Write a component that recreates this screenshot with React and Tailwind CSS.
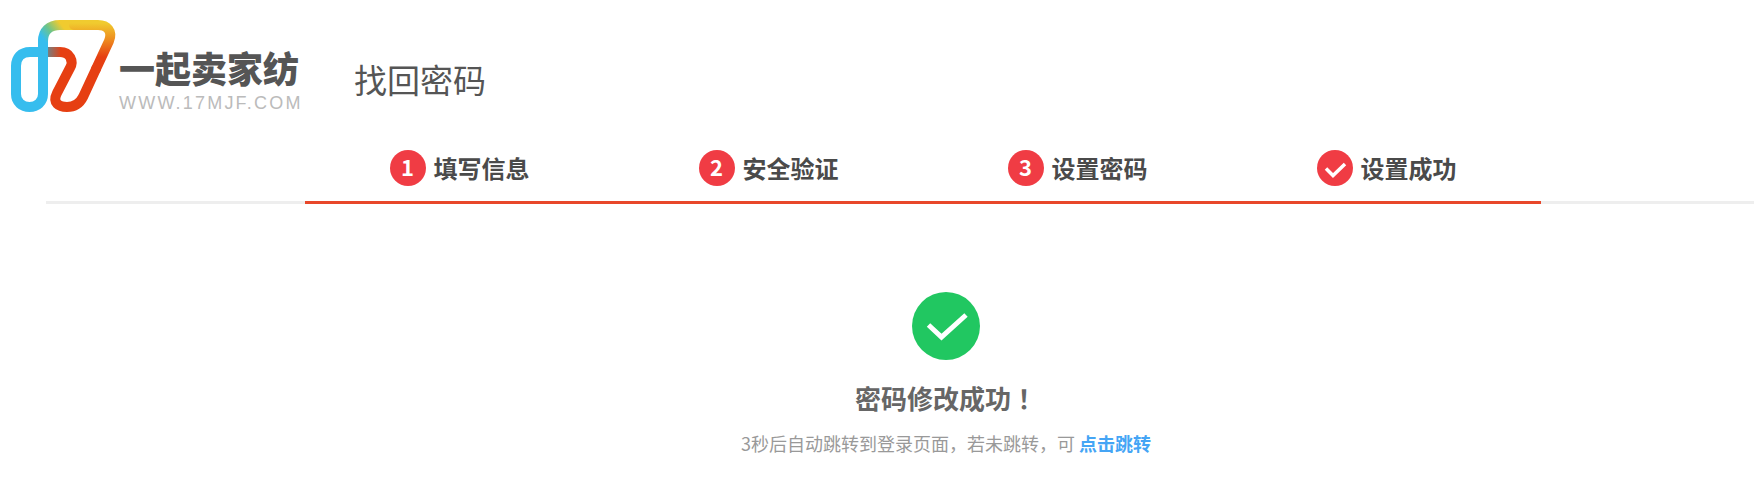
import React from 'react';

const steps = [
  { label: '填写信息', mark: '1' },
  { label: '安全验证', mark: '2' },
  { label: '设置密码', mark: '3' },
  { label: '设置成功', mark: 'check' },
];

// 站点 logo：蓝黄红三色线条
const LogoMark = () => (
  <svg width="111" height="120" viewBox="0 0 111 120" fill="none" strokeWidth="10" strokeLinecap="round" className="shrink-0 -mt-[14px]">
    <defs>
      <linearGradient id="cornerLeft" gradientUnits="userSpaceOnUse" x1="42" y1="36" x2="60" y2="22">
        <stop offset="0" stopColor="#36bdee" />
        <stop offset="0.45" stopColor="#6cc48c" />
        <stop offset="1" stopColor="#f0cb2f" />
      </linearGradient>
      <linearGradient id="cornerRight" gradientUnits="userSpaceOnUse" x1="100" y1="22" x2="100" y2="56">
        <stop offset="0" stopColor="#f0cb2f" />
        <stop offset="0.5" stopColor="#ee8a1e" />
        <stop offset="1" stopColor="#e63f12" />
      </linearGradient>
      <linearGradient id="crossBar" gradientUnits="userSpaceOnUse" x1="44" y1="51" x2="62" y2="51">
        <stop offset="0" stopColor="#5b8f9c" />
        <stop offset="1" stopColor="#e63f12" />
      </linearGradient>
    </defs>
    <g transform="translate(-10 0)">
      <path d="M60 51 C70 51 74 60 70 67 L57 92 C52 102 59 106 67 106 C75 106 80 102 83 96 L96 68" stroke="#e63f12" />
      <path d="M44 51 H60" stroke="url(#crossBar)" strokeLinecap="butt" />
      <path d="M43 51 H30 C21 51 16 57 16 65 V93 C16 101 22 106 29.500 106 C37 106 43 101 43 93 V40" stroke="#36bdee" />
      <path d="M43 40 C43 30 49 24 60 24 H74" stroke="url(#cornerLeft)" />
      <path d="M74 24 H98 C107 24 113 30 109 40 L96 68" stroke="url(#cornerRight)" />
    </g>
  </svg>
);

const StepMark = ({ mark }) => (
  <span className="w-[36px] h-[36px] rounded-full bg-[#f03c44] flex items-center justify-center text-white text-[22px] font-bold leading-none">
    {mark === 'check' ? (
      <svg width="36" height="36" viewBox="0 0 36 36" fill="none" stroke="#fff" strokeWidth="3.500">
        <path d="M9 18.500 L16 25.500 L28 14" />
      </svg>
    ) : (
      <span className="pb-[4px]">{mark}</span>
    )}
  </span>
);

export default function App() {
  return (
    <div className="w-full h-[478px] overflow-hidden bg-white font-['Noto_Sans_CJK_SC','Noto_Sans',sans-serif]">
      {/* Header */}
      <header className="flex items-start h-[132px] pl-[10px] pt-[15px]">
        <LogoMark />
        <div className="w-[184px] shrink-0 -ml-[2px] pt-[30px]">
          <div className="text-[36px] leading-[44px] font-black text-[#555] whitespace-nowrap">一起卖家纺</div>
          <div className="text-[18px] leading-[20px] mt-[4px] text-[#bbb] tracking-[2.200px] whitespace-nowrap font-['Liberation_Sans',sans-serif]">WWW.17MJF.COM</div>
        </div>
        <h1 className="ml-[51px] mt-[40px] text-[33px] leading-[48px] font-normal text-[#555] whitespace-nowrap">找回密码</h1>
      </header>

      {/* Steps */}
      <div className="ml-[46px] border-b-[3px] border-[#eeeeee] h-[72px] pl-[259px]">
        <div className="flex w-[1236px] h-[72px] border-b-[3px] border-[#e8472a]">
          {steps.map((step) => (
            <div key={step.label} className="flex-1 flex items-center justify-center gap-[8px] pt-[2px]">
              <StepMark mark={step.mark} />
              <span className="text-[24px] font-bold text-[#4a4a4a] leading-none">{step.label}</span>
            </div>
          ))}
        </div>
      </div>

      {/* Result */}
      <div className="ml-[46px] w-[1800px] flex flex-col items-center pt-[88px]">
        <div className="w-[68px] h-[68px] rounded-full bg-[#21c761]">
          <svg width="68" height="68" viewBox="0 0 68 68" fill="none" stroke="#fff" strokeWidth="5">
            <path d="M16.500 33 L29.500 45 L54 23" />
          </svg>
        </div>
        <h2 className="mt-[19px] text-[26px] leading-[38px] font-bold text-[#666]">
          密码修改成功<span className="font-['Noto_Sans_CJK_TC',sans-serif]">！</span>
        </h2>
        <p className="mt-[13px] text-[18px] leading-[26px] text-[#999]">
          3秒后自动跳转到登录页面，若未跳转，可 <a className="font-bold text-[#45a5f5]">点击跳转</a>
        </p>
      </div>
    </div>
  );
}
